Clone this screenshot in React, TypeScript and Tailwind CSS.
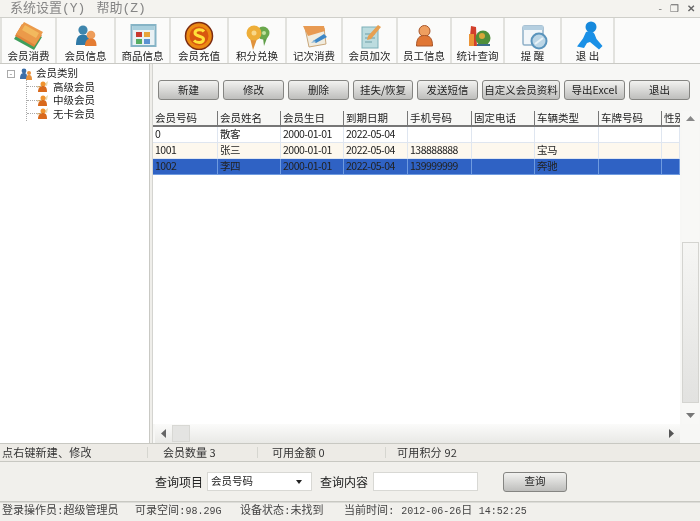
const CJK = { fontFamily: '"Noto Sans CJK SC", "Liberation Sans", sans-serif' };
const MONO = { fontFamily: '"Liberation Mono", "Noto Sans CJK SC", monospace' };

function CardIcon() {
  return (
    <svg width="30" height="30" viewBox="0 0 30 30">
      <path d="M8 6l20 11-8 13L0 19z" fill="#3f9e5c" />
      <path d="M8 4l20 11-8 12L1 16z" fill="#e0823a" />
      <path d="M10 2l19 10-8 13L2 14z" fill="#eb9a4a" />
      <path d="M11 5l14 8-3 5-14-8z" fill="#f2b95e" />
    </svg>
  );
}

function PeopleIcon() {
  return (
    <svg width="30" height="30" viewBox="0 0 30 30">
      <circle cx="12" cy="10" r="4.6" fill="#3f86ad" />
      <path d="M5 25c0-7 2-10.500 7-10.500s7 3.500 7 10.500z" fill="#2f79a6" />
      <circle cx="20" cy="15" r="4.300" fill="#ee9d5a" />
      <path d="M14 26c0-5 2-7.500 6-7.500s5.500 2.500 5.500 7.500z" fill="#e47c32" />
    </svg>
  );
}

function GoodsIcon() {
  return (
    <svg width="30" height="30" viewBox="0 0 30 30">
      <rect x="3.500" y="5" width="24" height="21" fill="#e9f1f4" stroke="#86b4c6" strokeWidth="2" />
      <rect x="5" y="6" width="21" height="4" fill="#a9cfdd" />
      <rect x="8" y="12" width="6" height="5" fill="#c8392f" />
      <rect x="16" y="12" width="6" height="5" fill="#e7a43a" />
      <rect x="8" y="19" width="6" height="5" fill="#56ad62" />
      <rect x="16" y="19" width="6" height="5" fill="#5b92d2" />
    </svg>
  );
}

function CoinIcon() {
  return (
    <svg width="30" height="30" viewBox="0 0 30 30">
      <circle cx="15" cy="16" r="13.500" fill="#ec8a12" stroke="#7c2c12" strokeWidth="1.500" />
      <circle cx="15" cy="16" r="9.500" fill="#d8570f" />
      <path d="M20 11.500c-2-2.500-9-2.500-9 1.500s9 2.500 8.500 6.500-7 3.500-9.500 1" fill="none" stroke="#ffe13a" strokeWidth="3" />
    </svg>
  );
}

function ExchangeIcon() {
  return (
    <svg width="30" height="30" viewBox="0 0 30 30">
      <path d="M21 18l1 8 3-8z" fill="#5f9e48" />
      <circle cx="21" cy="13" r="6.500" fill="#6aa84c" />
      <path d="M8 18l3 12 4-11z" fill="#e0923c" />
      <circle cx="12" cy="13" r="7.500" fill="#eeae38" />
      <circle cx="12" cy="13" r="2.500" fill="#f8d88a" />
      <circle cx="22" cy="13" r="2" fill="#c2e29e" />
    </svg>
  );
}

function RecordIcon() {
  return (
    <svg width="30" height="30" viewBox="0 0 30 30">
      <path d="M6 8h19l2 16-17 3z" fill="#f1ecdf" stroke="#c9a77a" />
      <path d="M4 6h21l1 5-17 5z" fill="#e89a52" />
      <path d="M14 21l11-7 3 3-11 6z" fill="#3d88c8" />
      <path d="M12 23l3-3 2 2z" fill="#8db8d8" />
    </svg>
  );
}

function AddIcon() {
  return (
    <svg width="30" height="30" viewBox="0 0 30 30">
      <rect x="7" y="7" width="16" height="21" fill="#bcdcdf" stroke="#7cb0b8" />
      <path d="M10 14h10M10 18h10M10 22h7" stroke="#6d9ea6" />
      <path d="M13 16L23 5l3 2-10 12-4 1z" fill="#e7a052" />
    </svg>
  );
}

function StaffIcon() {
  return (
    <svg width="30" height="30" viewBox="0 0 30 30">
      <circle cx="15.500" cy="11" r="5.500" fill="#ef9f60" stroke="#a8562a" />
      <path d="M7.500 26c0-8 3-10.500 8-10.500s8 2.500 8 10.500z" fill="#e07634" stroke="#a8562a" />
    </svg>
  );
}

function StatsIcon() {
  return (
    <svg width="30" height="30" viewBox="0 0 30 30">
      <path d="M8 6l5 1 1 19H6z" fill="#d23f2b" />
      <path d="M6 14h5v12H6z" fill="#ec9436" />
      <circle cx="20" cy="18" r="7.500" fill="#4f8f3a" />
      <circle cx="19" cy="16" r="3" fill="#d8a83a" />
      <path d="M14 24h13v2H14z" fill="#3d6f8c" />
    </svg>
  );
}

function RemindIcon() {
  return (
    <svg width="30" height="30" viewBox="0 0 30 30">
      <rect x="5" y="6" width="20" height="19" rx="1.500" fill="#f2f6f9" stroke="#8fb0c8" strokeWidth="1.500" />
      <rect x="5" y="6" width="20" height="4" fill="#b5cfe0" />
      <circle cx="21" cy="21" r="7.500" fill="#bcd6e6" stroke="#5a94bc" strokeWidth="2" />
      <path d="M17 24l8-6" stroke="#e9f3f8" strokeWidth="2" />
    </svg>
  );
}

function ExitIcon() {
  return (
    <svg width="30" height="30" viewBox="0 0 30 30">
      <circle cx="18" cy="7" r="5.500" fill="#1689dc" />
      <path d="M13 12c3-1.500 7-1 8.500 2l2 5 6 7-3.500 3.500-9-7.500-3 1-3 5-7-1.500 6-8z" fill="#1a90e6" />
    </svg>
  );
}

const tools = [
  { label: '会员消费', icon: <CardIcon />, width: 'w-[57px]' },
  { label: '会员信息', icon: <PeopleIcon />, width: 'w-[59px]' },
  { label: '商品信息', icon: <GoodsIcon />, width: 'w-[55px]' },
  { label: '会员充值', icon: <CoinIcon />, width: 'w-[58px]' },
  { label: '积分兑换', icon: <ExchangeIcon />, width: 'w-[58px]' },
  { label: '记次消费', icon: <RecordIcon />, width: 'w-[56px]' },
  { label: '会员加次', icon: <AddIcon />, width: 'w-[55px]' },
  { label: '员工信息', icon: <StaffIcon />, width: 'w-[54px]' },
  { label: '统计查询', icon: <StatsIcon />, width: 'w-[53px]' },
  { label: '提 醒', icon: <RemindIcon />, width: 'w-[57px]' },
  { label: '退 出', icon: <ExitIcon />, width: 'w-[53px]' },
];

const actions = [
  { label: '新建', width: 'w-[61px]' },
  { label: '修改', width: 'w-[61px]' },
  { label: '删除', width: 'w-[61px]' },
  { label: '挂失/恢复', width: 'w-[60px]' },
  { label: '发送短信', width: 'w-[61px]' },
  { label: '自定义会员资料', width: 'w-[78px]' },
  { label: '导出Excel', width: 'w-[61px]' },
  { label: '退出', width: 'w-[61px]' },
];

const columns = [
  { label: '会员号码', width: 'w-[65px]' },
  { label: '会员姓名', width: 'w-[63px]' },
  { label: '会员生日', width: 'w-[63px]' },
  { label: '到期日期', width: 'w-[64px]' },
  { label: '手机号码', width: 'w-[64px]' },
  { label: '固定电话', width: 'w-[63px]' },
  { label: '车辆类型', width: 'w-[64px]' },
  { label: '车牌号码', width: 'w-[63px]' },
  { label: '性别', width: 'w-[18px]' },
];

const rows = [
  { cells: ['0', '散客', '2000-01-01', '2022-05-04', '', '', '', '', ''], bg: 'bg-white', line: 'border-[#dfe6f0]' },
  { cells: ['1001', '张三', '2000-01-01', '2022-05-04', '138888888', '', '宝马', '', ''], bg: 'bg-[#fdf8ee]', line: 'border-[#dfe6f0]' },
  { cells: ['1002', '李四', '2000-01-01', '2022-05-04', '139999999', '', '奔驰', '', ''], bg: 'bg-[#2f62c4]', line: 'border-[#6f9be0]' },
];

function TreeFigure() {
  return (
    <svg width="12" height="13" viewBox="0 0 12 13" className="shrink-0">
      <path d="M6 5l5-4-1 5z" fill="#e6d8b0" />
      <circle cx="6" cy="4" r="2.500" fill="#f0932e" />
      <path d="M1 12c0-4 2-6 5-6s4 2 4 6z" fill="#d9691c" />
      <path d="M0 7l5-1" stroke="#c9a060" />
    </svg>
  );
}

function Action({ label, width }: { label: string; width: string }) {
  return (
    <button className={`${width} h-5 shrink-0 rounded-[3px] border border-[#858582] bg-gradient-to-b from-[#f2f2f0] via-[#d8d8d6] to-[#bebebc] text-[10.5px] leading-none text-[#222] whitespace-nowrap`}>
      {label}
    </button>
  );
}

export default function App() {
  return (
    <div style={CJK} className="w-[700px] h-[521px] flex flex-col overflow-hidden bg-[#f1f0ec] text-[#222] blur-[0.35px]">
      {/* Menu bar */}
      <div className="h-[18px] flex items-center justify-between pl-[10px] pr-[5px] pb-[1px] bg-[#f4f3ef] border-b border-[#cfcfca]">
        <div style={MONO} className="flex gap-[11px] text-[13px] leading-none text-[#858585]">
          <span>系统设置(Y)</span>
          <span>帮助(Z)</span>
        </div>
        <div className="flex items-center gap-[8px] text-[10px] leading-none text-[#666]">
          <span>-</span>
          <span>❐</span>
          <span className="font-bold">✕</span>
        </div>
      </div>

      {/* Toolbar */}
      <div className="h-[46px] flex bg-[#fbfbfa] border-b border-[#c9c9c4]">
        {tools.map((tool) => (
          <div key={tool.label} className={`${tool.width} first:border-l-2 flex flex-col items-center border-r-2 border-[#e2e2de] pt-[2px]`}>
            <div className="h-[30px] flex items-center justify-center">{tool.icon}</div>
            <span className="text-[10.5px] leading-[12px] whitespace-nowrap">{tool.label}</span>
          </div>
        ))}
      </div>

      {/* Body */}
      <div className="flex h-[379px]">
        <div className="w-[150px] shrink-0 bg-white border-r border-[#c9c9c4] pl-[7px] pt-[3px]">
          <div className="flex items-center gap-[5px] h-[13px] text-[10.5px] leading-none">
            <span className="w-[8px] h-[8px] border border-[#aaa] text-[8px] leading-[6px] text-center text-[#777]">-</span>
            <svg width="12" height="12" viewBox="0 0 12 12" className="shrink-0">
              <circle cx="4" cy="3" r="2.400" fill="#3d6fa8" />
              <path d="M0 11c0-4 1-6 4-6s3 2 3 6z" fill="#3d6fa8" />
              <circle cx="9" cy="5" r="2" fill="#e8913c" />
              <path d="M6 12c0-4 1-5 3-5s3 1 3 5z" fill="#e8913c" />
            </svg>
            <span className="ml-[-1px]">会员类别</span>
          </div>
          <div className="ml-[19px] border-l border-dotted border-[#aaa] mb-[6px]">
            {['高级会员', '中级会员', '无卡会员'].map((name) => (
              <div key={name} className="flex items-center h-[13.5px] text-[10.5px] leading-none">
                <span className="w-[10px] border-t border-dotted border-[#aaa]" />
                <TreeFigure />
                <span className="ml-[4px]">{name}</span>
              </div>
            ))}
          </div>
        </div>

        <div className="w-[3px] shrink-0 bg-[#efeeea] border-r border-[#d4d4d0]" />

        <div className="flex-1 min-w-0 flex flex-col bg-[#f7f7f5]">
          <div className="h-[47px] flex items-start gap-[4px] pl-[5px] pt-[16px]">
            {actions.map((action) => (
              <Action key={action.label} label={action.label} width={action.width} />
            ))}
          </div>

          <div className="flex-1 flex min-h-0">
            <div className="w-[527px] flex flex-col bg-white overflow-hidden">
              <div className="h-[16px] flex bg-[#f7f7f5] border-b-2 border-[#777]">
                {columns.map((col) => (
                  <div key={col.label} className={`${col.width} shrink-0 pl-[2px] border-r border-[#777] last:border-r-0 text-[10.5px] leading-[14px] whitespace-nowrap overflow-hidden`}>
                    {col.label}
                  </div>
                ))}
              </div>
              {rows.map((row) => (
                <div key={row.cells[0]} className={`h-[16px] flex ${row.bg} border-b ${row.line}`}>
                  {row.cells.map((cell, i) => (
                    <div key={i} className={`${columns[i].width} shrink-0 pl-[2px] border-r ${row.line} text-[10.5px] tracking-[-0.5px] leading-[14px] whitespace-nowrap overflow-hidden`}>
                      {cell}
                    </div>
                  ))}
                </div>
              ))}
            </div>

            <div className="w-[17px] ml-[2px] flex flex-col items-center bg-[#f8f8f6]">
              <svg width="9" height="5" viewBox="0 0 9 5" className="mt-[5px] shrink-0">
                <path d="M0 5l4.500-5L9 5z" fill="#888" />
              </svg>
              <div className="w-full h-[161px] mt-[121px] border border-[#d4d4d0] bg-gradient-to-b from-[#f6f6f4] to-[#e2e2e0]" />
              <svg width="9" height="5" viewBox="0 0 9 5" className="mt-[10px] shrink-0">
                <path d="M0 0l4.500 5L9 0z" fill="#777" />
              </svg>
            </div>
          </div>

          <div className="h-[19px] flex items-center bg-gradient-to-b from-[#fbfbfa] to-[#e9e9e6] ml-[2px] mr-[20px]">
            <svg width="5" height="9" viewBox="0 0 5 9" className="ml-[6px] shrink-0">
              <path d="M5 0L0 4.500 5 9z" fill="#666" />
            </svg>
            <div className="w-[18px] h-[17px] ml-[6px] bg-[#e4e4e2] border border-[#d8d8d4]" />
            <div className="flex-1" />
            <svg width="5" height="9" viewBox="0 0 5 9" className="mr-[6px] shrink-0">
              <path d="M0 0l5 4.500L0 9z" fill="#555" />
            </svg>
          </div>
        </div>
      </div>

      {/* Summary line */}
      <div className="h-[19px] flex items-center bg-[#edebe6] border-y border-[#c8c8c2] text-[11px] leading-none text-[#333] whitespace-nowrap">
        <span className="w-[148px] pl-[2px] tracking-[0.2px] border-r border-[#d6d6d0]">点右键新建、修改</span>
        <span className="w-[110px] pl-[15px] border-r border-[#d6d6d0]">会员数量 3</span>
        <span className="w-[128px] pl-[14px] border-r border-[#d6d6d0]">可用金额 0</span>
        <span className="pl-[11px] tracking-[0.2px]">可用积分 92</span>
      </div>

      {/* Query bar */}
      <div className="h-[40px] flex items-center bg-[#f1f0ec] border-b border-[#c8c8c2] text-[12px] leading-none">
        <span className="ml-[155px] w-[52px]">查询项目</span>
        <div className="w-[105px] h-[19px] bg-white border border-[#d8d8d4] flex items-center justify-between pl-[3px] pr-[9px] text-[10.5px]">
          <span>会员号码</span>
          <span className="w-0 h-0 border-x-[3px] border-x-transparent border-t-[4px] border-t-[#222]" />
        </div>
        <span className="ml-[8px] w-[53px]">查询内容</span>
        <div className="w-[105px] h-[19px] bg-white border border-[#d8d8d4]" />
        <button className="ml-[25px] w-[64px] h-[20px] rounded-[3px] border border-[#858582] bg-gradient-to-b from-[#f2f2f0] via-[#d8d8d6] to-[#bebebc] text-[10.5px] leading-none">
          查询
        </button>
      </div>

      {/* Status bar */}
      <div style={MONO} className="flex-1 flex items-center pb-[2px] bg-[#f1f0ec] border-t border-[#dcdcd8] text-[11px] leading-none text-[#444] whitespace-nowrap">
        <span className="w-[135px] pl-[2px]">登录操作员:超级管理员</span>
        <span className="w-[105px]">可录空间:<span className="text-[10px]">98.29G</span></span>
        <span className="w-[104px]">设备状态:未找到</span>
        <span>当前时间: <span className="text-[10px]">2012-06-26</span>日 <span className="text-[10px]">14:52:25</span></span>
      </div>
    </div>
  );
}
